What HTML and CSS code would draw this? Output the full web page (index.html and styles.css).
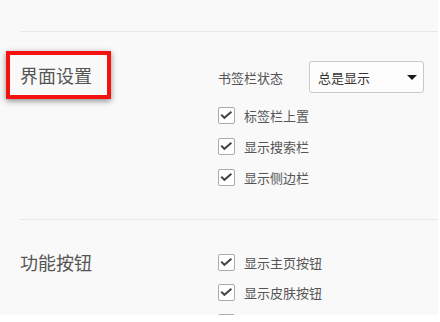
FILE: index.html
```html
<!DOCTYPE html>
<html lang="zh-CN">
<head>
<meta charset="utf-8">
<title>界面设置</title>
<link rel="stylesheet" href="styles.css">
</head>
<body>
<div class="page">
  <div class="sep"></div>
  <section class="group g1">
    <div class="title"><span class="title-text">界面设置</span><span class="mark"></span></div>
    <div class="opts">
      <div class="field">
        <span class="label">书签栏状态</span>
        <div class="select"><span class="select-text">总是显示</span><span class="caret"></span></div>
      </div>
      <div class="rows">
        <div class="check"><span class="box"><svg viewBox="0 0 17 17" width="17" height="17"><path d="M3.2 7.6 L6.4 10.8 L13.4 4.8" /></svg></span><span class="check-text">标签栏上置</span></div>
        <div class="check"><span class="box"><svg viewBox="0 0 17 17" width="17" height="17"><path d="M3.2 7.6 L6.4 10.8 L13.4 4.8" /></svg></span><span class="check-text">显示搜索栏</span></div>
        <div class="check"><span class="box"><svg viewBox="0 0 17 17" width="17" height="17"><path d="M3.2 7.6 L6.4 10.8 L13.4 4.8" /></svg></span><span class="check-text">显示侧边栏</span></div>
      </div>
    </div>
  </section>
  <div class="sep"></div>
  <section class="group g2">
    <div class="title"><span class="title-text">功能按钮</span></div>
    <div class="opts">
      <div class="check c30"><span class="box"><svg viewBox="0 0 17 17" width="17" height="17"><path d="M3.2 7.6 L6.4 10.8 L13.4 4.8" /></svg></span><span class="check-text">显示主页按钮</span></div>
      <div class="check c30"><span class="box"><svg viewBox="0 0 17 17" width="17" height="17"><path d="M3.2 7.6 L6.4 10.8 L13.4 4.8" /></svg></span><span class="check-text">显示皮肤按钮</span></div>
      <div class="check c30"><span class="box"></span></div>
    </div>
  </section>
</div>
</body>
</html>
```
FILE: styles.css
```css
html, body {
  margin: 0;
  padding: 0;
  background: #ffffff;
}
body {
  font-family: "Noto Sans CJK SC", "Noto Sans", sans-serif;
  color: #555555;
}
.page {
  width: 438px;
  height: 315px;
  box-sizing: border-box;
  padding-top: 31px;
  padding-left: 20px;
  background: #f9f9f9;
  overflow: hidden;
}
.sep {
  height: 1px;
  background: #e8e8e8;
}
.group {
  display: flex;
}
.g1 {
  padding: 29px 0 26px;
}
.g2 {
  padding-top: 27px;
}
.title {
  flex: none;
  width: 198px;
  position: relative;
  align-self: flex-start;
}
.title-text {
  display: block;
  font-size: 18px;
  line-height: 28px;
  color: #555555;
}
.g2 .title-text {
  line-height: 30px;
}
.mark {
  position: absolute;
  left: -14px;
  top: -10px;
  width: 105px;
  height: 48px;
  box-sizing: border-box;
  border: 4px solid #f4120f;
  box-shadow: 0 2px 6px rgba(0, 0, 0, 0.45);
}
.opts {
  display: flex;
  flex-direction: column;
}
.field {
  display: flex;
  align-items: center;
  height: 32px;
}
.label {
  font-size: 13px;
  color: #555555;
  margin-right: 26px;
}
.select {
  width: 115px;
  height: 32px;
  box-sizing: border-box;
  border: 1px solid #c9c9c9;
  border-radius: 3px;
  background: #fdfdfd;
  display: flex;
  align-items: center;
  justify-content: space-between;
  padding: 0 6px 0 8px;
}
.select-text {
  font-size: 13px;
  color: #333333;
}
.caret {
  width: 0;
  height: 0;
  border-left: 5px solid transparent;
  border-right: 5px solid transparent;
  border-top: 5px solid #1a1a1a;
}
.rows {
  margin-top: 7px;
  display: flex;
  flex-direction: column;
}
.check {
  display: flex;
  align-items: center;
  height: 31px;
}
.check.c30 {
  height: 30px;
}
.box {
  flex: none;
  width: 17px;
  height: 17px;
  box-sizing: border-box;
  border: 1px solid #ababab;
  border-radius: 2px;
  background: #ffffff;
  margin-right: 9px;
  position: relative;
}
.box svg {
  position: absolute;
  left: -1px;
  top: -1px;
  fill: none;
  stroke: #444444;
  stroke-width: 2;
}
.check-text {
  font-size: 13px;
  color: #555555;
}
```
